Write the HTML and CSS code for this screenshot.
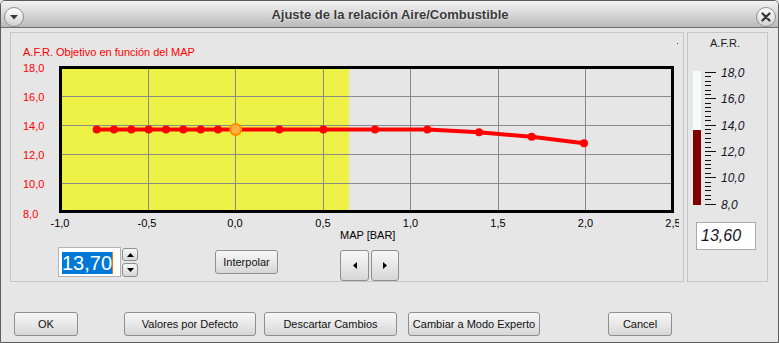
FILE: index.html
```html
<!DOCTYPE html>
<html>
<head>
<meta charset="utf-8">
<title>Ajuste de la relación Aire/Combustible</title>
<link rel="stylesheet" href="styles.css">
</head>
<body>
<div class="window">
  <div class="titlebar">
    <span class="tb-btn"><svg width="8" height="5" viewBox="0 0 8 5"><path d="M0 0 H8 L4 4.5 Z" fill="#3a3a3a"/></svg></span>
    <div class="title">Ajuste de la relación Aire/Combustible</div>
    <span class="tb-btn"><svg width="10" height="10" viewBox="0 0 10 10"><path d="M1.5 1.5 L8.5 8.5 M8.5 1.5 L1.5 8.5" stroke="#333" stroke-width="2.2" stroke-linecap="round"/></svg></span>
  </div>
  <div class="content">
    <div class="main-row">
      <div class="panel chart-panel">
        <svg class="chart" width="672" height="212" viewBox="0 0 672 212">
          <defs>
            <clipPath id="xclip"><rect x="0" y="200" width="679" height="40"/></clipPath>
          </defs>
          <g transform="translate(-11,-33)" font-family="Liberation Sans, Arial, sans-serif" font-size="11">
            <text x="23" y="56" fill="#ff0000">A.F.R. Objetivo en función del MAP</text>
            <rect x="677" y="43" width="1" height="1" fill="#c00000"/>
            <rect x="61" y="67" width="288" height="145" fill="#eef145"/>
            <g stroke="#8a8a8a" stroke-width="1">
              <path d="M148.5 68 V212 M235.5 68 V212 M323.5 68 V212 M410.5 68 V212 M498.5 68 V212 M585.5 68 V212"/>
              <path d="M61 96.5 H673 M61 125.5 H673 M61 154.5 H673 M61 183.5 H673"/>
            </g>
            <rect x="60.5" y="67.5" width="612" height="144" fill="none" stroke="#000" stroke-width="3"/>
            <polyline points="96.7,129.5 114,129.5 131.3,129.5 148.7,129.5 166,129.5 183.3,129.5 200.7,129.5 218,129.5 235.7,129.5 279.3,129.5 323.3,129.5 375,129.5 427.3,129.5 479,132.3 531.7,136.7 584,143.3" fill="none" stroke="#ff0000" stroke-width="4" stroke-linejoin="round"/>
            <g fill="#ff0000">
              <circle cx="96.7" cy="129.5" r="4"/>
              <circle cx="114" cy="129.5" r="4"/>
              <circle cx="131.3" cy="129.5" r="4"/>
              <circle cx="148.7" cy="129.5" r="4"/>
              <circle cx="166" cy="129.5" r="4"/>
              <circle cx="183.3" cy="129.5" r="4"/>
              <circle cx="200.7" cy="129.5" r="4"/>
              <circle cx="218" cy="129.5" r="4"/>
              <circle cx="279.3" cy="129.5" r="4"/>
              <circle cx="323.3" cy="129.5" r="4"/>
              <circle cx="375" cy="129.5" r="4"/>
              <circle cx="427.3" cy="129.5" r="4"/>
              <circle cx="479" cy="132.3" r="4"/>
              <circle cx="531.7" cy="136.7" r="4"/>
              <circle cx="584" cy="143.3" r="4"/>
            </g>
            <circle cx="235.7" cy="129.5" r="5.5" fill="#ffb040" stroke="#ff8a00" stroke-width="2"/>
            <g fill="#ff0000">
              <text x="23" y="71.5">18,0</text>
              <text x="23" y="100.5">16,0</text>
              <text x="23" y="129.5">14,0</text>
              <text x="23" y="158.5">12,0</text>
              <text x="23" y="187.5">10,0</text>
              <text x="23" y="218">8,0</text>
            </g>
            <g fill="#000" text-anchor="middle" clip-path="url(#xclip)">
              <text x="60" y="226.5">-1,0</text>
              <text x="147" y="226.5">-0,5</text>
              <text x="235" y="226.5">0,0</text>
              <text x="323" y="226.5">0,5</text>
              <text x="410.5" y="226.5">1,0</text>
              <text x="498" y="226.5">1,5</text>
              <text x="585.5" y="226.5">2,0</text>
              <text x="673" y="226.5">2,5</text>
            </g>
            <text x="340" y="239" fill="#000">MAP [BAR]</text>
          </g>
        </svg>
        <div class="controls">
          <div class="spin-input"><span class="sel">13,70</span></div>
          <div class="spin-btns">
            <button class="btn spin-btn up"><svg width="7" height="4" viewBox="0 0 7 4"><path d="M0 4 H7 L3.5 0 Z" fill="#000"/></svg></button>
            <button class="btn spin-btn down"><svg width="7" height="4" viewBox="0 0 7 4"><path d="M0 0 H7 L3.5 4 Z" fill="#000"/></svg></button>
          </div>
          <button class="btn interp">Interpolar</button>
          <div class="arrows">
            <button class="btn arrow left"><svg width="4" height="7" viewBox="0 0 4 7"><path d="M4 0 V7 L0 3.5 Z" fill="#000"/></svg></button>
            <button class="btn arrow right"><svg width="4" height="7" viewBox="0 0 4 7"><path d="M0 0 V7 L4 3.5 Z" fill="#000"/></svg></button>
          </div>
        </div>
      </div>
      <div class="panel gauge-panel">
        <svg class="gauge" width="79" height="189" viewBox="0 0 79 189">
          <g transform="translate(-688,-33)" font-family="Liberation Sans, Arial, sans-serif">
            <text x="725" y="47" font-size="11" text-anchor="middle" fill="#1a1a1a">A.F.R.</text>
            <rect x="693" y="71" width="8" height="59" fill="#f8f9f9"/>
            <rect x="693" y="130" width="8" height="75" fill="#7f0000"/>
            <path d="M705 72.5 h11 M705 76.5 h6 M705 81.5 h6 M705 85.5 h6 M705 90.5 h6 M705 94.5 h6 M705 98.5 h11 M705 103.5 h6 M705 107.5 h6 M705 111.5 h6 M705 116.5 h6 M705 120.5 h6 M705 125.5 h11 M705 129.5 h6 M705 133.5 h6 M705 138.5 h6 M705 142.5 h6 M705 147.5 h6 M705 151.5 h11 M705 155.5 h6 M705 160.5 h6 M705 164.5 h6 M705 168.5 h6 M705 173.5 h6 M705 177.5 h11 M705 182.5 h6 M705 186.5 h6 M705 190.5 h6 M705 195.5 h6 M705 199.5 h6 M705 204.5 h11" stroke="#111" stroke-width="1"/>
            <g font-size="12" font-style="italic" fill="#141428">
              <text x="721" y="77">18,0</text>
              <text x="721" y="103">16,0</text>
              <text x="721" y="129.5">14,0</text>
              <text x="721" y="155.5">12,0</text>
              <text x="721" y="182">10,0</text>
              <text x="721" y="208.5">8,0</text>
            </g>
          </g>
        </svg>
        <div class="value-box">13,60</div>
      </div>
    </div>
    <div class="buttons">
      <button class="btn b-ok">OK</button>
      <button class="btn b-def">Valores por Defecto</button>
      <button class="btn b-desc">Descartar Cambios</button>
      <button class="btn b-exp">Cambiar a Modo Experto</button>
      <button class="btn b-cancel">Cancel</button>
    </div>
  </div>
</div>
</body>
</html>
```
FILE: styles.css
```css
html, body {
  margin: 0;
  padding: 0;
  background: #e6e6e6;
}

.window {
  width: 779px;
  height: 343px;
  box-sizing: border-box;
  border: 1px solid #5c5c5c;
  border-radius: 5px 5px 0 0;
  background: #e6e6e6;
  overflow: hidden;
  font-family: "Liberation Sans", Arial, sans-serif;
  font-size: 11px;
  color: #111;
}

.titlebar {
  height: 26px;
  border-bottom: 1px solid #6e6e6e;
  background: linear-gradient(#f3f3f3, #d4d4d4 55%, #b9b9b9);
  display: flex;
  align-items: flex-start;
  padding: 0 2px 0 3px;
}

.tb-btn {
  width: 20px;
  height: 20px;
  margin-top: 6px;
  box-sizing: border-box;
  border-radius: 50%;
  border: 1px solid #8e8e8e;
  background: linear-gradient(#ffffff, #e4e4e4 60%, #cfcfcf);
  display: flex;
  align-items: center;
  justify-content: center;
}

.title {
  flex: 1;
  text-align: center;
  font-weight: bold;
  font-size: 13px;
  line-height: 28px;
  color: #3a3a3a;
  text-shadow: 0 0 2px #ffffff;
}

.content {
  padding: 4px 0 0 9px;
}

.main-row {
  display: flex;
  gap: 3px;
}

.panel {
  box-sizing: border-box;
  height: 250px;
  border: 1px solid #c6c6c6;
}

.chart-panel {
  width: 674px;
}

.gauge-panel {
  width: 81px;
}

.chart, .gauge {
  display: block;
}

.controls {
  display: flex;
  align-items: flex-start;
  height: 36px;
}

.btn {
  box-sizing: border-box;
  margin: 0;
  padding: 0;
  border: 1px solid #8f8f8f;
  border-radius: 3px;
  background: linear-gradient(#f7f7f7, #e8e8e8 50%, #d6d6d6);
  font-family: "Liberation Sans", Arial, sans-serif;
  font-size: 11px;
  color: #111;
  display: flex;
  align-items: center;
  justify-content: center;
}

.spin-input {
  margin: 2px 0 0 47px;
  width: 63px;
  height: 30px;
  box-sizing: border-box;
  border: 1px solid #b3b3b3;
  background: #ffffff;
  display: flex;
  align-items: center;
  padding: 1px 0 0 3px;
}

.sel {
  background: #0078d7;
  color: #ffffff;
  font-size: 20px;
  line-height: 22px;
  border-right: 1px solid #e87a00;
}

.spin-btns {
  margin: 3px 0 0 1px;
  display: flex;
  flex-direction: column;
  gap: 2px;
}

.spin-btn {
  width: 16px;
  height: 13px;
  border-radius: 3px;
}

.spin-btn.down {
  height: 14px;
}

.interp {
  margin: 5px 0 0 77px;
  width: 63px;
  height: 24px;
}

.arrows {
  margin: 5px 0 0 62px;
  display: flex;
  gap: 2px;
}

.arrow {
  height: 31px;
  width: 29px;
}

.arrow.right {
  width: 28px;
}

.value-box {
  margin-left: 8px;
  width: 60px;
  height: 28px;
  box-sizing: border-box;
  border: 1px solid #a9a9a9;
  background: #ffffff;
  font-size: 16px;
  font-style: italic;
  color: #141428;
  display: flex;
  align-items: center;
  padding-left: 4px;
}

.buttons {
  display: flex;
  margin-top: 30px;
}

.buttons .btn {
  height: 24px;
}

.b-ok {
  margin-left: 4px;
  width: 64px;
}

.b-def {
  margin-left: 46px;
  width: 132px;
}

.b-desc {
  margin-left: 8px;
  width: 133px;
}

.b-exp {
  margin-left: 11px;
  width: 132px;
}

.b-cancel {
  margin-left: 68px;
  width: 64px;
}
```
